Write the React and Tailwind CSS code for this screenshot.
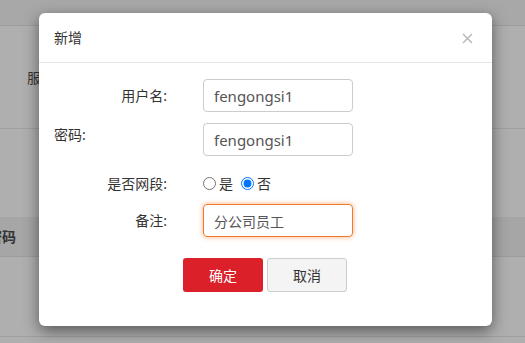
import React from "react";

export default function App() {
  const font = { fontFamily: '"Noto Sans", "Noto Sans CJK SC", sans-serif' };
  return (
    <div className="relative w-[525px] h-[343px] overflow-hidden bg-[#afafaf] text-[#333]" style={font}>
      {/* background page */}
      <div className="flex flex-col">
        <div className="h-[26px] bg-[#a8a8a8] border-b border-[#9c9c9c]"></div>
        <div className="h-[103px] border-b border-[#a0a0a0] flex items-center pl-[27px] text-[14px] text-[#333]">服务</div>
        <div className="h-[88px]"></div>
        <div className="h-[40px] bg-[#a6a6a6] border-b border-[#9c9c9c] flex items-center text-[14px] font-bold text-[#333]">
          <span className="ml-[-12px]">密码</span>
        </div>
        <div className="h-[80px] border-b border-[#a0a0a0]"></div>
      </div>

      {/* modal */}
      <div className="absolute left-[39px] top-[13px] w-[453px] h-[313px] bg-white rounded-[6px] shadow-[0_5px_15px_rgba(0,0,0,0.5)] flex flex-col">
        <div className="h-[50px] border-b border-[#e5e5e5] flex items-center justify-between pl-[15px] pr-[19px]">
          <span className="text-[14px] text-[#333]">新增</span>
          <svg width="11" height="11" viewBox="0 0 11 11" className="mt-[1px]">
            <path d="M1 1 L10 10 M10 1 L1 10" stroke="#b5b5b5" strokeWidth="1.4" />
          </svg>
        </div>
        <div className="flex flex-col pt-[16px] text-[14px]">
          <div className="flex items-center h-[33px]">
            <label className="w-[128px] text-right">用户名:</label>
            <input readOnly value="fengongsi1" className="ml-[36px] w-[150px] h-[33px] border border-[#ccc] rounded-[4px] pl-[10px] text-[15px] text-[#555] outline-none" />
          </div>
          <div className="flex items-center h-[33px] mt-[11px]">
            <label className="w-[128px] pl-[15px] text-left -mt-[10px]">密码:</label>
            <input readOnly value="fengongsi1" className="ml-[36px] w-[150px] h-[33px] border border-[#ccc] rounded-[4px] pl-[10px] text-[15px] text-[#555] outline-none" />
          </div>
          <div className="flex items-center h-[33px] mt-[11px]">
            <label className="w-[128px] text-right">是否网段:</label>
            <div className="ml-[36px] flex items-center text-[14px]">
              <input type="radio" name="wd" className="m-0 w-[13px] h-[13px]" readOnly />
              <span className="ml-[3px]">是</span>
              <input type="radio" name="wd" defaultChecked className="m-0 ml-[8px] w-[13px] h-[13px]" />
              <span className="ml-[3px]">否</span>
            </div>
          </div>
          <div className="flex items-center h-[33px] mt-[4px]">
            <label className="w-[128px] text-right">备注:</label>
            <input readOnly value="分公司员工" className="ml-[36px] w-[150px] h-[33px] border border-[#f07a2a] rounded-[4px] pl-[10px] text-[14px] text-[#555] outline-none shadow-[0_0_5px_rgba(240,122,42,0.6)]" />
          </div>
          <div className="flex items-center mt-[21px] pl-[144px] gap-[4px]">
            <button className="w-[80px] h-[34px] bg-[#dc2029] text-white rounded-[3px] text-[14px]">确定</button>
            <button className="w-[80px] h-[34px] bg-[#f4f4f4] border border-[#ccc] text-[#333] rounded-[3px] text-[14px]">取消</button>
          </div>
        </div>
      </div>
    </div>
  );
}
